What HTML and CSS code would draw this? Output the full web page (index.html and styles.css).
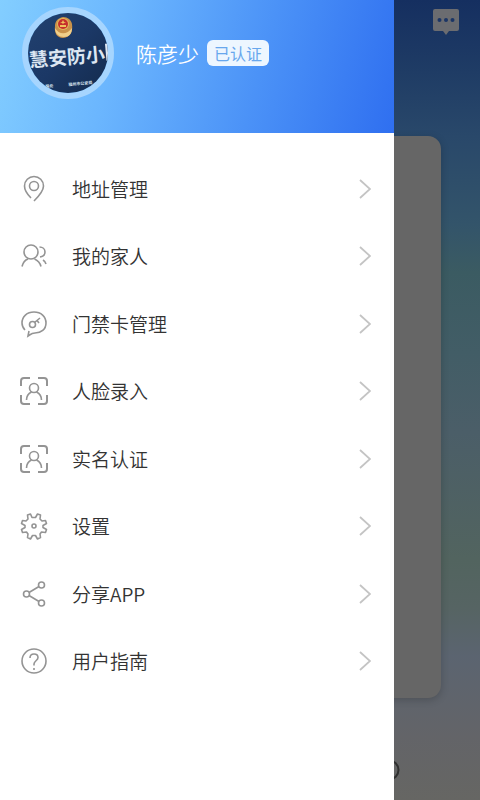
FILE: index.html
```html
<!DOCTYPE html>
<html lang="zh-CN">
  <head>
    <meta charset="UTF-8">
    <meta name="viewport" content="width=device-width, initial-scale=1.0">
    <title>个人中心</title>
    <link rel="stylesheet" href="styles.css">
  </head>
  <body>
    <div class="home">
      <header class="home__header">
        <button class="home__msg" type="button" aria-label="消息">
          <svg width="28" height="28" viewBox="0 0 28 28">
            <path fill="#6b6c70" d="M3 1h22a2 2 0 0 1 2 2v18a2 2 0 0 1-2 2h-8l-3 4-3-4H3a2 2 0 0 1-2-2V3a2 2 0 0 1 2-2z"/>
            <g fill="#1b3565"><circle cx="7.500" cy="12" r="2"/><circle cx="14" cy="12" r="2"/><circle cx="20.500" cy="12" r="2"/></g>
          </svg>
        </button>
      </header>
      <main class="home__card"></main>
      <footer class="home__footer">
        <svg width="22" height="22" viewBox="0 0 22 22"><circle cx="11" cy="11" r="9.500" fill="none" stroke="#303030" stroke-width="2"/></svg>
      </footer>
    </div>

    <aside class="drawer">
      <header class="drawer__header">
        <svg class="drawer__avatar" viewBox="0 0 80 80">
          <defs>
            <linearGradient id="board" x1="0" y1="0" x2="1" y2="1">
              <stop offset="0" stop-color="#22416f"/>
              <stop offset=".5" stop-color="#1b3866"/>
              <stop offset="1" stop-color="#142b4d"/>
            </linearGradient>
          </defs>
          <rect width="80" height="80" fill="url(#board)"/>
          <path fill="#c9924a" d="M27 13c0-5 3-8 8-9 5 0 8 3 9 7 1 7-1 13-9 14-6 0-9-5-8-12z"/>
          <path fill="#f0cf8a" d="M27 15c4 7 12 7 17 0 0 6-3 9-8 9s-9-3-9-9z"/>
          <circle cx="35" cy="11" r="6" fill="#e2b45c"/>
          <circle cx="35" cy="11" r="5" fill="#c6302c"/>
          <path fill="#efc15d" d="M32 12h6v2h-6zM35 7l1 2h2l-2 1-1 1-1-1-2-1h2z"/>
          <g transform="rotate(-5 40 44)">
            <text class="drawer__sign" x="1" y="51">慧安防小</text>
            <path fill="#dce6f2" d="M78 34h4v17h-4z"/>
            <text class="drawer__sign drawer__sign--small" x="15" y="73">服务</text>
            <text class="drawer__sign drawer__sign--small" x="38" y="73">福州市公安局</text>
          </g>
        </svg>
        <span class="drawer__name">陈彦少</span>
        <span class="drawer__badge">已认证</span>
      </header>

      <nav class="menu">
        <a class="menu__item" href="#address">
          <svg class="menu__icon" viewBox="0 0 30 30">
            <path d="M12 24C9 21 5.500 17 5.500 12a9.500 9.500 0 0 1 19 0c0 5-4.500 10-9.500 15"/>
            <circle cx="15" cy="12" r="4.500"/>
          </svg>
          <span class="menu__text">地址管理</span>
          <svg class="menu__arrow" viewBox="0 0 12 20"><path d="M1 1l10 9-10 9"/></svg>
        </a>
        <a class="menu__item" href="#family">
          <svg class="menu__icon" viewBox="0 0 30 30">
            <circle cx="12" cy="11" r="7"/>
            <path d="M3 25.500c1-4 3-6.500 6-7.500M15.500 18c3.500 1.500 5.500 3.500 6.500 7.500M20.500 6c3 0 5.500 2 5.500 5s-2 4.500-5 5M24 19c1.500 1 2.500 2 3 4"/>
          </svg>
          <span class="menu__text">我的家人</span>
          <svg class="menu__arrow" viewBox="0 0 12 20"><path d="M1 1l10 9-10 9"/></svg>
        </a>
        <a class="menu__item" href="#card">
          <svg class="menu__icon" viewBox="0 0 30 30">
            <path d="M6 21C4 19 3 16.500 3 14 3 7.500 8 3 15 3s12 4.500 12 11-5 10-11 10c-3 0-4 1-7 3l1-5"/>
            <circle cx="13.500" cy="15.500" r="3"/>
            <path d="M15.500 13.500l5.500-4.500M18 11.500l2 2.500"/>
          </svg>
          <span class="menu__text">门禁卡管理</span>
          <svg class="menu__arrow" viewBox="0 0 12 20"><path d="M1 1l10 9-10 9"/></svg>
        </a>
        <a class="menu__item" href="#face">
          <svg class="menu__icon" viewBox="0 0 30 30">
            <path class="menu__frame" d="M2 10V5a3 3 0 0 1 3-3h6M19 2h6a3 3 0 0 1 3 3v5M28 19v6a3 3 0 0 1-3 3h-6M11 28H5a3 3 0 0 1-3-3v-6"/>
            <circle cx="15" cy="12" r="4.500"/>
            <path d="M7.500 24c0-4 2-6.500 5-8M17.500 16c3 1.500 5 4 5 8"/>
          </svg>
          <span class="menu__text">人脸录入</span>
          <svg class="menu__arrow" viewBox="0 0 12 20"><path d="M1 1l10 9-10 9"/></svg>
        </a>
        <a class="menu__item" href="#realname">
          <svg class="menu__icon" viewBox="0 0 30 30">
            <path class="menu__frame" d="M2 10V5a3 3 0 0 1 3-3h6M19 2h6a3 3 0 0 1 3 3v5M28 19v6a3 3 0 0 1-3 3h-6M11 28H5a3 3 0 0 1-3-3v-6"/>
            <circle cx="15" cy="12" r="4.500"/>
            <path d="M7.500 24c0-4 2-6.500 5-8M17.500 16c3 1.500 5 4 5 8"/>
          </svg>
          <span class="menu__text">实名认证</span>
          <svg class="menu__arrow" viewBox="0 0 12 20"><path d="M1 1l10 9-10 9"/></svg>
        </a>
        <a class="menu__item" href="#settings">
          <svg class="menu__icon" viewBox="0 0 30 30">
            <path stroke-linejoin="round" d="M13 6.500l-1.500-3.500-3 1 .5 4-2 2-3.500-.5-1 3 3.500 2v2l-3.500 2 1 3 4-.5 1.500 2-.5 3.500 3 1.500 2-3.500h3l2 3.500 3-1.500-.5-3.500 1.500-2 4 .5 1-3-3.500-2v-2l3.500-2-1-3-3.500.5-2-2 .5-4-3-1-2 3.500z"/>
            <circle cx="15" cy="15" r="2"/>
          </svg>
          <span class="menu__text">设置</span>
          <svg class="menu__arrow" viewBox="0 0 12 20"><path d="M1 1l10 9-10 9"/></svg>
        </a>
        <a class="menu__item" href="#share">
          <svg class="menu__icon" viewBox="0 0 30 30">
            <circle cx="7.500" cy="15" r="3"/>
            <circle cx="22.500" cy="6" r="3"/>
            <circle cx="22.500" cy="24" r="3"/>
            <path d="M10 13.500l10-6M10 16.500l10 6"/>
          </svg>
          <span class="menu__text">分享APP</span>
          <svg class="menu__arrow" viewBox="0 0 12 20"><path d="M1 1l10 9-10 9"/></svg>
        </a>
        <a class="menu__item" href="#guide">
          <svg class="menu__icon" viewBox="0 0 30 30">
            <circle cx="15" cy="15" r="12"/>
            <path d="M11 12c0-2.500 1.500-4 4-4s4 1.500 4 3.500c0 3-4 3.500-4 6.500v1.500M15 22v2"/>
          </svg>
          <span class="menu__text">用户指南</span>
          <svg class="menu__arrow" viewBox="0 0 12 20"><path d="M1 1l10 9-10 9"/></svg>
        </a>
      </nav>
    </aside>
  </body>
</html>
```
FILE: styles.css
```css
html, body {
  margin: 0;
  font-family: 'Noto Sans CJK SC', Roboto, sans-serif;
}

* {
  box-sizing: border-box;
}

/* dimmed home page under the drawer */
.home {
  display: flex;
  flex-direction: column;
  min-height: 100vh;
  background: linear-gradient(#152f60 0%, #1f3c65 9%, #29486a 17%, #33546a 28%, #3b5b62 34%, #425d66 44%, #4b5e68 54%, #52645f 70%, #566463 76%, #5b6470 82%, #636468 92%, #666663 100%);
}

.home__header {
  display: flex;
  justify-content: flex-end;
  height: 136px;
  padding: 8px 20px;
}

.home__msg {
  width: 28px;
  height: 28px;
  padding: 0;
  border: 0;
  background: none;
}

.home__card {
  flex: 1;
  margin: 0 39px;
  border-radius: 13px;
  background-color: #666;
  box-shadow: 0 2px 8px rgba(0, 0, 0, 0.2);
}

.home__footer {
  display: flex;
  justify-content: flex-end;
  align-items: flex-end;
  height: 102px;
  padding: 19px 80px;
}

.drawer {
  position: absolute;
  top: 0;
  left: 0;
  display: flex;
  flex-direction: column;
  width: 82%;
  min-height: 100%;
  background-color: #fff;
}

.drawer__header {
  display: flex;
  align-items: center;
  height: 133px;
  padding: 0 22px 28px;
  background: linear-gradient(105deg, #83ceff 0%, #6bb6fe 30%, #4b92f7 65%, #2f6ff0 100%);
}

.drawer__avatar {
  width: 92px;
  height: 92px;
  border: 6px solid #a6d5fe;
  border-radius: 50%;
}

.drawer__sign {
  fill: #dce6f2;
  font-size: 19px;
  font-weight: 700;
}

.drawer__sign--small {
  font-size: 4px;
}

.drawer__name {
  margin-left: 22px;
  color: #fff;
  font-size: 21px;
  font-weight: 350;
  line-height: 28px;
}

.drawer__badge {
  margin-left: 8px;
  padding: 0 7px;
  border-radius: 6px;
  background-color: #edf6ff;
  color: #68a7ed;
  font-size: 16px;
  line-height: 26px;
}

.menu {
  display: flex;
  flex: 1;
  flex-direction: column;
  padding: 22px 0 105px;
}

.menu__item {
  display: flex;
  flex: 1;
  align-items: center;
  padding: 0 23px 0 19px;
  color: #333;
  text-decoration: none;
}

.menu__icon {
  width: 30px;
  height: 30px;
  fill: none;
  stroke: #949494;
  stroke-width: 1.6;
}

.menu__frame {
  stroke-width: 2;
}

.menu__text {
  flex: 1;
  margin-left: 23px;
  font-size: 19px;
  font-weight: 350;
  line-height: 28px;
}

.menu__arrow {
  width: 12px;
  height: 20px;
  fill: none;
  stroke: #c4c4c4;
  stroke-width: 1.8;
}
```
